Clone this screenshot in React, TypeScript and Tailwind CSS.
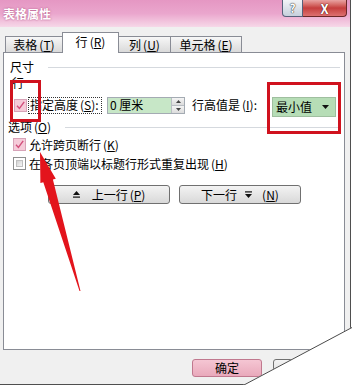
import React from "react";

function Key({ k }: { k: string }) {
  return (
    <span className="ml-[2px] shrink-0">
      (<span className="underline underline-offset-[1px]">{k}</span>)
    </span>
  );
}

function Check({ checked }: { checked: boolean }) {
  if (checked) {
    return (
      <span className="w-[13px] h-[13px] shrink-0 border border-[#d7a3b8] bg-[#f5cbd9] flex items-center justify-center">
        <svg width="9" height="9" viewBox="0 0 9 9">
          <path d="M1 4.8 L3.4 7.4 L8.2 0.8" fill="none" stroke="#d24f7c" strokeWidth="1.4" />
        </svg>
      </span>
    );
  }
  return (
    <span className="w-[13px] h-[13px] shrink-0 border border-[#8e8f8f] bg-white p-[2px] flex">
      <span className="flex-1 bg-gradient-to-br from-[#d2d2d2] to-[#f6f6f6] border border-[#c0c0c0]" />
    </span>
  );
}

function Tab({ label, k, active, w, first }: { label: string; k: string; active?: boolean; w: string; first?: boolean }) {
  const base = "shrink-0 flex items-center justify-center border border-b-0 border-[#898c95] " + (first ? "" : "-ml-px ");
  if (active) {
    return (
      <div className={base + w + " h-[21px] -mb-px relative z-10 bg-white pb-[3px]"}>
        <span>{label}</span>
        <Key k={k} />
      </div>
    );
  }
  return (
    <div className={base + w + " h-[16px] bg-gradient-to-b from-[#f7f7f7] to-[#dadada]"}>
      <span>{label}</span>
      <Key k={k} />
    </div>
  );
}

function GroupHeader({ text, k }: { text: string; k?: string }) {
  return (
    <div className="flex items-center">
      <span className="shrink-0">{text}</span>
      {k ? <Key k={k} /> : null}
      <div className="flex-1 h-px bg-[#d5d9de] ml-[14px]" />
    </div>
  );
}

export default function App() {
  return (
    <div className="relative w-[352px] h-[385px] overflow-hidden bg-white whitespace-nowrap font-['Noto_Sans_CJK_SC','Noto_Sans',sans-serif] text-[12px] leading-[16px] text-black">
      <div className="flex flex-col w-[351px] h-[385px] bg-[#f0f0f0] border-r border-b border-[#4f4f4f]">
        {/* Title bar */}
        <div className="h-[27px] flex items-start bg-gradient-to-b from-[#e597c3] via-[#eaa6cd] to-[#f6d8e8]">
          <span className="pl-[3px] pt-[6px] font-bold text-white [text-shadow:0_0_2px_#a8487a]">表格属性</span>
          <div className="ml-auto mr-[3px] flex">
            <div className="w-[21px] h-[17px] border border-t-0 border-[#56607a] rounded-bl-[4px] bg-gradient-to-b from-[#f2f4f7] to-[#c6d0dc] flex items-center justify-center font-bold text-[12px] leading-none text-white [text-shadow:0_0_1px_#222,0_0_1px_#222]">
              ?
            </div>
            <div className="w-[44px] h-[17px] border border-t-0 border-l-0 border-[#6b2727] rounded-br-[4px] bg-gradient-to-b from-[#e8a2a2] via-[#c53d3d] to-[#dd7070] flex items-center justify-center font-bold text-[13px] leading-none text-white [text-shadow:0_0_1px_#4a0a0a,0_0_1px_#4a0a0a]">
              X
            </div>
          </div>
        </div>

        {/* Tabs */}
        <div className="h-[25px] flex items-end pl-[5px]">
          <Tab label="表格" k="T" w="w-[58px]" first />
          <Tab label="行" k="R" w="w-[57px]" active />
          <Tab label="列" k="U" w="w-[53px]" />
          <Tab label="单元格" k="E" w="w-[72px]" />
        </div>

        {/* Panel */}
        <div className="ml-[3px] w-[342px] h-[298px] border border-[#898c95] bg-white flex flex-col">
          <div className="pl-[6px] pr-[4px] pt-[6px]">
            <GroupHeader text="尺寸" />
          </div>
          <div className="pl-[8px]">行</div>

          {/* Row height row */}
          <div className="mt-[3px] h-[22px] flex items-center pl-[10px]">
            <Check checked />
            <div className="ml-[1px] w-[74px] h-[17px] shrink-0 border border-dotted border-[#333] flex items-center pl-[1px]">
              <span className="shrink-0">指定高度</span>
              <Key k="S" />
              <span className="shrink-0">:</span>
            </div>
            <div className="ml-[5px] w-[78px] h-[17px] shrink-0 border border-[#a4abb3] bg-[#c7e7c7] flex items-center">
              <span className="flex-1 pl-[2px]">0 厘米</span>
              <div className="w-[13px] h-full flex flex-col border-l border-[#b9bec4]">
                <div className="flex-1 bg-gradient-to-b from-[#f4f4f4] to-[#dcdcdc] border-b border-[#b9bec4] flex items-center justify-center">
                  <svg width="5" height="3" viewBox="0 0 5 3"><polygon points="2.5,0 5,3 0,3" fill="#444" /></svg>
                </div>
                <div className="flex-1 bg-gradient-to-b from-[#f4f4f4] to-[#dcdcdc] flex items-center justify-center">
                  <svg width="5" height="3" viewBox="0 0 5 3"><polygon points="0,0 5,0 2.5,3" fill="#444" /></svg>
                </div>
              </div>
            </div>
            <div className="ml-[7px] w-[80px] shrink-0 flex items-center">
              <span className="shrink-0">行高值是</span>
              <Key k="I" />
              <span className="shrink-0">:</span>
            </div>
            <div className="mt-[4px] w-[64px] h-[20px] shrink-0 border border-[#9fbf9f] bg-[#b6ddb6] flex items-center pl-[3px] pr-[6px]">
              <span className="flex-1">最小值</span>
              <svg width="7" height="4" viewBox="0 0 7 4"><polygon points="0,0 7,0 3.5,4" fill="#111" /></svg>
            </div>
          </div>

          <div className="mt-[3px] pl-[4px] pr-[4px]">
            <GroupHeader text="选项" k="O" />
          </div>

          <div className="h-[19px] flex items-center pl-[9px]">
            <Check checked />
            <span className="ml-[3px]">允许跨页断行</span>
            <Key k="K" />
          </div>
          <div className="h-[19px] flex items-center pl-[9px]">
            <Check checked={false} />
            <span className="ml-[3px]">在各页顶端以标题行形式重复出现</span>
            <Key k="H" />
          </div>

          <div className="mt-[12px] flex pl-[44px] gap-[9px]">
            <div className="w-[122px] h-[19px] border border-[#707070] rounded-[3px] bg-gradient-to-b from-[#f3f3f3] to-[#d9d9d9] flex items-center justify-center">
              <svg width="7" height="7" viewBox="0 0 7 7" className="mr-[12px]">
                <polygon points="3.5,0 7,4 0,4" fill="#111" />
                <rect x="0" y="5.5" width="7" height="1.2" fill="#111" />
              </svg>
              <span>上一行</span>
              <Key k="P" />
            </div>
            <div className="w-[122px] h-[19px] border border-[#707070] rounded-[3px] bg-gradient-to-b from-[#f3f3f3] to-[#d9d9d9] flex items-center justify-center">
              <span>下一行</span>
              <svg width="7" height="7" viewBox="0 0 7 7" className="mx-[8px]">
                <rect x="0" y="0.3" width="7" height="1.2" fill="#111" />
                <polygon points="0,3 7,3 3.5,7" fill="#111" />
              </svg>
              <Key k="N" />
            </div>
          </div>
        </div>

        {/* Bottom buttons */}
        <div className="mt-[9px] flex justify-end pr-[7px] gap-[11px]">
          <div className="w-[70px] h-[18px] border border-[#c0788e] rounded-[3px] bg-gradient-to-b from-[#f5c6d3] to-[#e9a9bb] flex items-center justify-center">
            确定
          </div>
          <div className="w-[70px] h-[18px] border border-[#707070] rounded-[3px] bg-gradient-to-b from-[#f3f3f3] to-[#d9d9d9] flex items-center justify-center">
            取消
          </div>
        </div>
      </div>

      {/* Red annotation boxes */}
      <div className="absolute left-[10px] top-[80px] w-[31px] h-[42px] border-[3px] border-[#d0121e]" />
      <div className="absolute left-[267px] top-[82px] w-[74px] h-[52px] border-[3px] border-[#d0121e]" />

      {/* Red arrow and page curl */}
      <svg className="absolute inset-0 pointer-events-none" width="352" height="385" viewBox="0 0 352 385">
        <polygon
          points="40,152 40.4,183.1 43.3,182.3 79.5,291.1 80.5,290.9 52.9,179.5 55.8,178.7"
          fill="#e3141c"
        />
        <polygon points="243,385 352,327 352,385" fill="#ffffff" />
        <line x1="243" y1="385.5" x2="352" y2="327.5" stroke="#4a4a4a" strokeWidth="1" />
      </svg>
    </div>
  );
}
